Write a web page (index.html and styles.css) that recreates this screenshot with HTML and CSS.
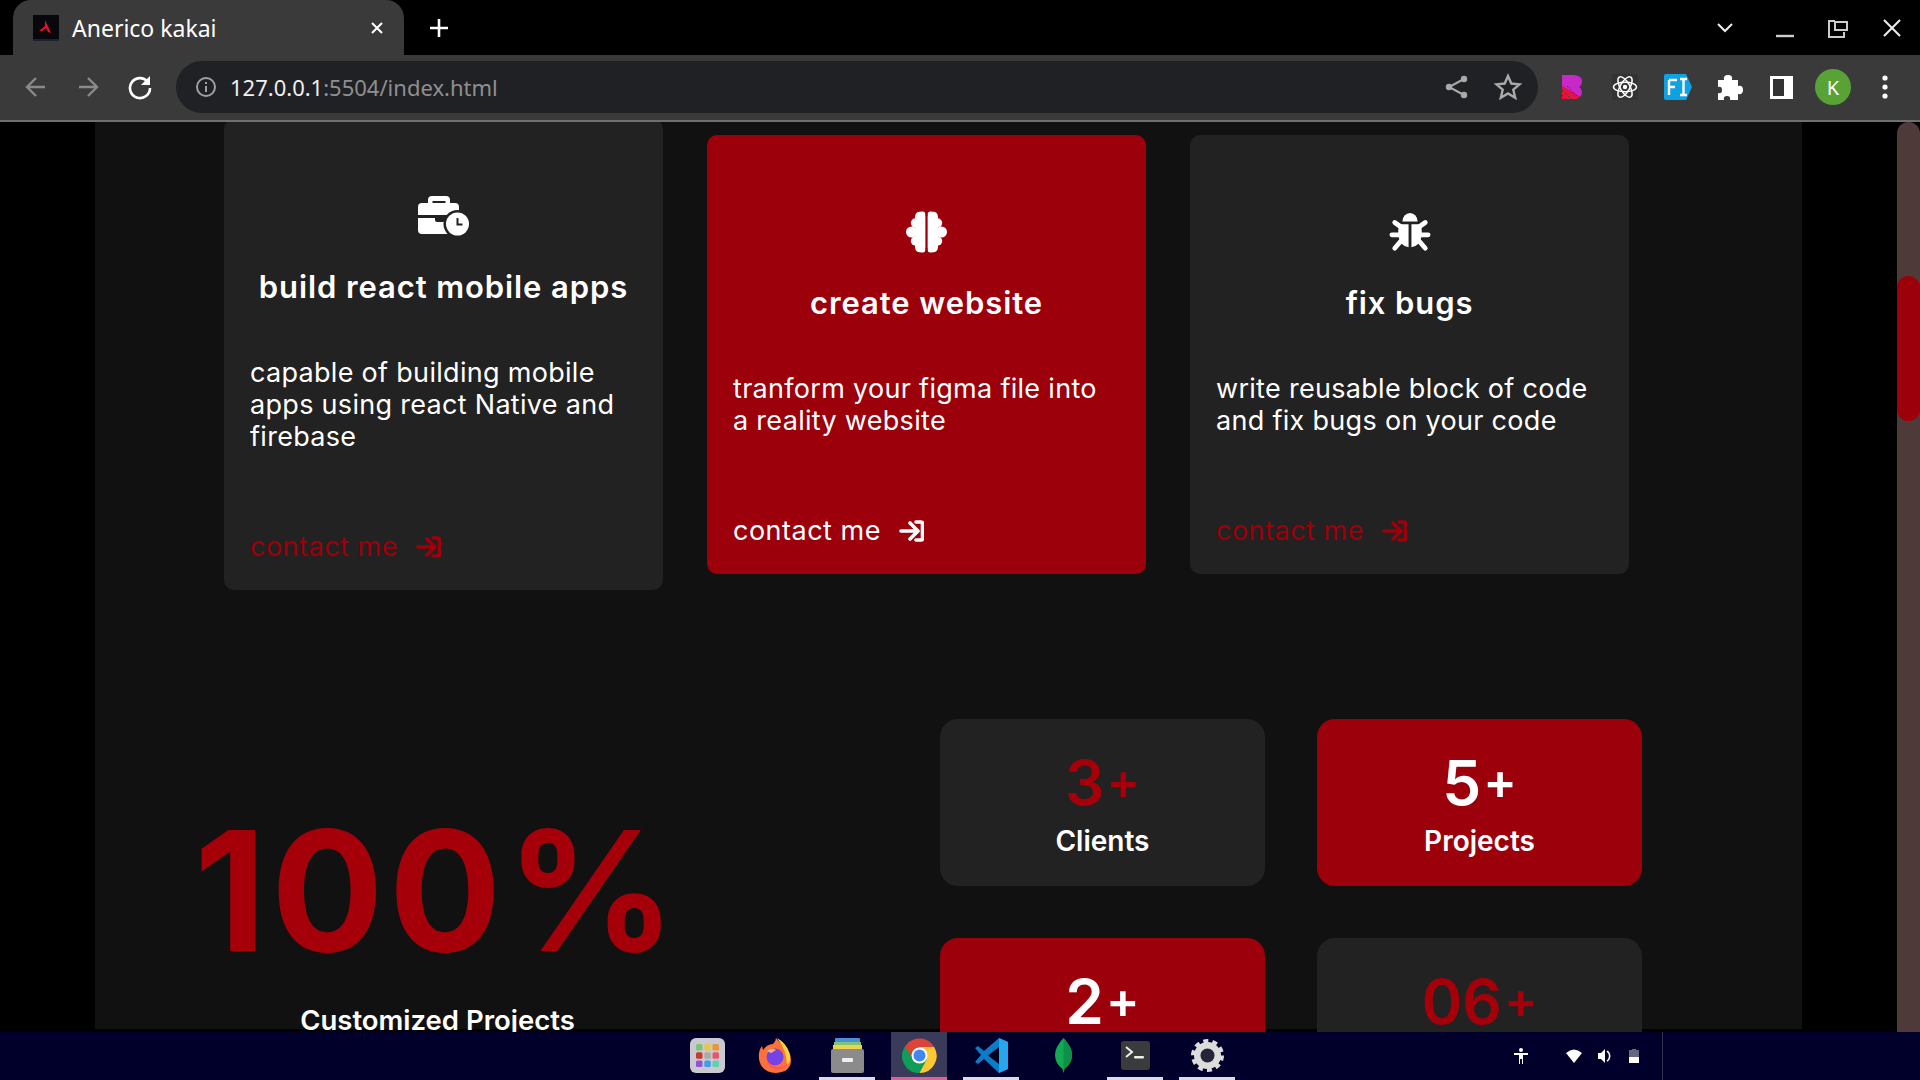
FILE: index.html
```html
<!DOCTYPE html>
<html lang="en">

<head>
    <meta charset="UTF-8">
    <meta name="viewport" content="width=device-width, initial-scale=1.0">
    <title>Anerico kakai</title>
    <link rel="stylesheet" href="styles.css">
</head>

<body>
    <!-- browser tabs -->
    <div class="tabstrip">
        <div class="tab">
            <svg class="favicon" viewBox="0 0 26 26"><rect width="26" height="26" fill="#08080c"/><path d="M12 5l6 13-3-1-2-4-4 3-3 0 6-5z" fill="#e8112d"/><rect y="24" width="26" height="2" fill="#1c2233"/></svg>
            <span class="tab-title">Anerico kakai</span>
            <svg class="tab-close" viewBox="0 0 14 14"><path d="M2 2l10 10M12 2L2 12" stroke="#fff" stroke-width="2"/></svg>
        </div>
        <svg class="new-tab" viewBox="0 0 20 20"><path d="M10 1v18M1 10h18" stroke="#fff" stroke-width="2.6"/></svg>
        <div class="window-btns">
            <svg class="win-btn" viewBox="0 0 52 52"><path d="M23 22l7 7 7-7" fill="none" stroke="#eee" stroke-width="2"/></svg>
            <svg class="win-btn" viewBox="0 0 52 52"><path d="M24 34h18" stroke="#ccc" stroke-width="2.4"/></svg>
            <svg class="win-btn" viewBox="0 0 52 52"><path d="M25 19h-5v16h15v-5M25 19v-1M26 20h12v8H26z" fill="none" stroke="#ccc" stroke-width="2"/></svg>
            <svg class="win-btn" viewBox="0 0 52 52"><path d="M18 18l16 16M34 18L18 34" stroke="#eee" stroke-width="2"/></svg>
        </div>
    </div>

    <!-- address bar -->
    <div class="toolbar">
        <svg class="tool-btn" viewBox="0 0 52 52"><path d="M35 26H18M26 17l-9 9 9 9" fill="none" stroke="#8a8a8a" stroke-width="2.4"/></svg>
        <svg class="tool-btn" viewBox="0 0 52 52"><path d="M17 26h17M26 17l9 9-9 9" fill="none" stroke="#8a8a8a" stroke-width="2.4"/></svg>
        <svg class="tool-btn" viewBox="0 0 52 52"><path d="M33.500 20.500A10 10 0 1 0 36 27" fill="none" stroke="#fff" stroke-width="2.600"/><path d="M36 15v9h-9z" fill="#fff"/></svg>
        <div class="omnibox">
            <svg class="info-icon" viewBox="0 0 22 22"><circle cx="11" cy="11" r="9" fill="none" stroke="#a0a0a0" stroke-width="2"/><path d="M11 10v6M11 6v2" stroke="#a0a0a0" stroke-width="2"/></svg>
            <span class="url">127.0.0.1<span class="url-rest">:5504/index.html</span></span>
            <svg class="omni-btn" viewBox="0 0 52 52"><circle cx="34" cy="18" r="3.200" fill="#aaa"/><circle cx="34" cy="34" r="3.200" fill="#aaa"/><circle cx="19" cy="26" r="3.200" fill="#aaa"/><path d="M34 18L19 26l15 8" fill="none" stroke="#aaa" stroke-width="2"/></svg>
            <svg class="omni-btn" viewBox="0 0 52 52"><path d="M26 15l3.300 7.500 8.200.8-6.200 5.400 1.900 8L26 32.500l-7.200 4.200 1.900-8-6.200-5.400 8.200-.8z" fill="none" stroke="#aaa" stroke-width="2.400"/></svg>
        </div>
        <svg class="tool-btn" viewBox="0 0 52 52"><path d="M15 14h11q9 0 9 6.500 0 3.500-3 5.500 3 2 3 5.500 0 3-2 4.500L15 25z" fill="#c828c8"/><path d="M15 25l18 11-3 2H15z" fill="#e8123c"/><path d="M15 29l9 9M15 34l4 4M20 25l13 13" stroke="#3a3a3a" stroke-width="1" stroke-dasharray="2 2"/></svg>
        <svg class="tool-btn" viewBox="0 0 52 52"><rect x="13" y="13" width="26" height="26" fill="#333"/><g fill="none" stroke="#fff" stroke-width="1.500"><ellipse cx="26" cy="26" rx="11.500" ry="4.800"/><ellipse cx="26" cy="26" rx="11.500" ry="4.800" transform="rotate(60 26 26)"/><ellipse cx="26" cy="26" rx="11.500" ry="4.800" transform="rotate(120 26 26)"/></g><circle cx="26" cy="26" r="2.200" fill="#fff"/></svg>
        <svg class="tool-btn" viewBox="0 0 52 52"><path d="M15 13h20l6 13-6 13H15q-2 0-2-2V15q0-2 2-2z" fill="#0ea2e4"/><path d="M18 19h8M18 19v15M18 26h6M29 18h7M29 34h7M32.500 18v16" fill="none" stroke="#fff" stroke-width="2.400"/></svg>
        <svg class="tool-btn" viewBox="0 0 52 52"><path d="M15 19h6q-1-5 4-5t4 5h6v6q5-1 5 4t-5 4v6H27q1-4-3-4t-3 4h-6v-7q4 1 4-3t-4-3z" fill="#fff"/></svg>
        <svg class="tool-btn" viewBox="0 0 52 52"><rect x="15" y="15" width="23" height="23" fill="#fff"/><rect x="18" y="18" width="11" height="17" fill="#333"/></svg>
        <div class="tool-slot"><div class="avatar">K</div></div>
        <svg class="tool-btn" viewBox="0 0 52 52"><circle cx="26" cy="17" r="2.600" fill="#fff"/><circle cx="26" cy="26" r="2.600" fill="#fff"/><circle cx="26" cy="35" r="2.600" fill="#fff"/></svg>
    </div>

    <!-- the scrolled page -->
    <div class="viewport">
        <div class="page">
            <div class="container">
                <section class="services">
                    <div class="card">
                        <svg class="card-icon" viewBox="0 -1 51 42"><path d="M10 7V4q0-4 4-4h14q4 0 4 4v3h5q4 0 4 4v8H0v-8q0-4 4-4zm4.500-2v2h13V5z" fill="#fff" fill-rule="evenodd"/><path d="M0 22h17v2q0 2 2 2h6q2 0 2-2v-2h14v16H4q-4 0-4-4z" fill="#fff"/><circle cx="39.500" cy="28" r="14" fill="#222"/><circle cx="39.500" cy="28" r="11.500" fill="#fff"/><path d="M39.500 22v6.500h5" fill="none" stroke="#222" stroke-width="2"/></svg>
                        <h3>build react mobile apps</h3>
                        <p>capable of building mobile apps using react Native and firebase</p>
                        <a class="contact">contact me
                            <svg viewBox="0 0 25 22"><path d="M2 11h16M11 3l8 8-8 8M17 2h5q1.500 0 1.500 1.500v15q0 1.500-1.500 1.500h-5" fill="none" stroke="currentColor" stroke-width="3.600" stroke-linecap="round" stroke-linejoin="round"/></svg>
                        </a>
                    </div>
                    <div class="card red">
                        <svg class="card-icon" viewBox="0 0 41 42"><g id="lobe" fill="#fff"><circle cx="13.500" cy="5" r="4.300"/><circle cx="9.500" cy="12" r="4.700"/><circle cx="5.500" cy="21" r="5.500"/><circle cx="9.500" cy="30" r="4.700"/><circle cx="13.500" cy="37" r="4.300"/><rect x="9" y="5" width="10.200" height="32"/><rect x="13" y="0.400" width="6.200" height="41.200" rx="2.500"/></g><use href="#lobe" transform="matrix(-1 0 0 1 41 0)"/></svg>
                        <h3>create website</h3>
                        <p>tranform your figma file into a reality website</p>
                        <a class="contact">contact me
                            <svg viewBox="0 0 25 22"><path d="M2 11h16M11 3l8 8-8 8M17 2h5q1.500 0 1.500 1.500v15q0 1.500-1.500 1.500h-5" fill="none" stroke="currentColor" stroke-width="3.600" stroke-linecap="round" stroke-linejoin="round"/></svg>
                        </a>
                    </div>
                    <div class="card">
                        <svg class="card-icon" viewBox="18 20 44 44"><path d="M32 31a8 9 0 0 1 16 0z" fill="#fff"/><path d="M29 34h9.500v24Q30 57 28 47q-1-9 1-13zM51 34h-9.500v24Q50 57 52 47q1-9-1-13z" fill="#fff"/><path d="M24 32l7 5M56 32l-7 5M21 45h8M59 45h-8M24 59l6-7M56 59l-6-7" stroke="#fff" stroke-width="5" stroke-linecap="round"/></svg>
                        <h3>fix bugs</h3>
                        <p>write reusable block of code and fix bugs on your code</p>
                        <a class="contact">contact me
                            <svg viewBox="0 0 25 22"><path d="M2 11h16M11 3l8 8-8 8M17 2h5q1.500 0 1.500 1.500v15q0 1.500-1.500 1.500h-5" fill="none" stroke="currentColor" stroke-width="3.600" stroke-linecap="round" stroke-linejoin="round"/></svg>
                        </a>
                    </div>
                </section>

                <section class="stats">
                    <div class="stats-left">
                        <div class="big-num">100%</div>
                        <div class="big-label">Customized Projects</div>
                    </div>
                    <div class="stats-grid">
                        <div class="stat">
                            <div class="stat-num">3<span class="plus">+</span></div>
                            <div class="stat-label">Clients</div>
                        </div>
                        <div class="stat red">
                            <div class="stat-num">5<span class="plus">+</span></div>
                            <div class="stat-label">Projects</div>
                        </div>
                        <div class="stat red">
                            <div class="stat-num">2<span class="plus">+</span></div>
                            <div class="stat-label">Years</div>
                        </div>
                        <div class="stat">
                            <div class="stat-num">06<span class="plus">+</span></div>
                            <div class="stat-label">Awards</div>
                        </div>
                    </div>
                </section>
            </div>
        </div>
        <div class="scroll-track">
            <div class="scroll-thumb"></div>
        </div>
    </div>

    <!-- desktop dock -->
    <div class="taskbar">
        <div class="dock">
            <div class="dock-item launcher">
                <svg viewBox="0 0 35 35"><rect width="35" height="35" rx="6" fill="#c9c9cf"/><rect x="6" y="6" width="6.500" height="6.500" rx="1.500" fill="#7cc576"/><rect x="14.300" y="6" width="6.500" height="6.500" rx="1.500" fill="#e8c547"/><rect x="22.500" y="6" width="6.500" height="6.500" rx="1.500" fill="#e8963a"/><rect x="6" y="14.300" width="6.500" height="6.500" rx="1.500" fill="#c8382e"/><rect x="14.300" y="14.300" width="6.500" height="6.500" rx="1.500" fill="#aaa"/><rect x="22.500" y="14.300" width="6.500" height="6.500" rx="1.500" fill="#e8556d"/><rect x="6" y="22.500" width="6.500" height="6.500" rx="1.500" fill="#8e55d8"/><rect x="14.300" y="22.500" width="6.500" height="6.500" rx="1.500" fill="#3f9ee8"/><rect x="22.500" y="22.500" width="6.500" height="6.500" rx="1.500" fill="#5fd0b0"/></svg>
            </div>
            <div class="dock-item">
                <svg viewBox="0 0 35 35"><path d="M18 0q4 5 8 8 7 6 7 14 0 12-15 13Q3 34 1 21 0 13 4 8l1 4q4-6 10-6 3-3 3-6z" fill="#ff7139"/><path d="M19 0q9 5 12 14 3 8-2 14 0-16-10-28z" fill="#ffd43b"/><circle cx="17" cy="19" r="8.500" fill="#7542e5"/><path d="M9 22q2 10 12 9 7-1 9-6-6 6-13 4-5-1-8-7z" fill="#ff4f5e"/><path d="M9 13q4-4 9-1l-5 3z" fill="#ffb08a"/></svg>
            </div>
            <div class="dock-item on">
                <svg viewBox="0 0 35 35"><rect x="5" y="0" width="25" height="5" rx="1" fill="#4a90d9"/><rect x="4" y="4" width="27" height="4" fill="#7cc576"/><rect x="3" y="7" width="29" height="4" fill="#f0d050"/><rect x="1" y="11" width="33" height="24" rx="2" fill="#8b8b8b"/><rect x="12" y="20" width="11" height="4" rx="1" fill="#eee"/></svg>
            </div>
            <div class="dock-item active">
                <svg viewBox="0 0 35 35"><circle cx="17.500" cy="17.500" r="17" fill="#db4437"/><path d="M17.500 35A17 17 0 0 0 32 9H17.500z" fill="#fcc934"/><path d="M3 8.500A17 17 0 0 0 17.500 35L25 21H11z" fill="#0f9d58"/><circle cx="17.500" cy="17.500" r="8" fill="#fff"/><circle cx="17.500" cy="17.500" r="6" fill="#4285f4"/></svg>
            </div>
            <div class="dock-item on">
                <svg viewBox="0 0 35 35"><path d="M25 0l9 4v27l-9 4L10 21l-6 5-3-2 6-7-6-7 3-2 6 5z" fill="#0a7cc8"/><path d="M25 0l9 4v27l-9 4z" fill="#25a6ee"/><path d="M25 9L14 17.500 25 26z" fill="#00001f"/></svg>
            </div>
            <div class="dock-item">
                <svg viewBox="0 0 35 35"><path d="M17.500 0q8.500 9 8.500 17t-7.500 14l-1 4-1-4Q9 25 9 17T17.500 0z" fill="#13aa52"/><path d="M17.500 0q8.500 9 8.500 17t-7.500 14l-1 4z" fill="#0f8f48"/></svg>
            </div>
            <div class="dock-item on">
                <svg viewBox="0 0 35 35"><rect x="3" y="3" width="29" height="29" rx="3" fill="#3b3b3b"/><path d="M8 9l6 5-6 5" fill="none" stroke="#eee" stroke-width="2"/><rect x="16" y="18" width="10" height="2.500" rx="1" fill="#eee"/></svg>
            </div>
            <div class="dock-item on">
                <svg viewBox="0 0 35 35"><circle cx="17.500" cy="17.500" r="10" fill="none" stroke="#dcdcdc" stroke-width="7"/><circle cx="17.500" cy="17.500" r="14.500" fill="none" stroke="#dcdcdc" stroke-width="4" stroke-dasharray="5 4.100"/><circle cx="17.500" cy="17.500" r="7" fill="#25253a"/></svg>
            </div>
        </div>
        <div class="tray">
            <svg class="tray-a11y" viewBox="0 0 14 16"><circle cx="7" cy="2" r="2" fill="#fff"/><path d="M0 5h14v2H9v9H8v-5H6v5H5V7H0z" fill="#fff"/></svg>
            <svg class="tray-wifi" viewBox="0 0 16 14"><path d="M0 4q8-7 16 0L8 14z" fill="#fff"/></svg>
            <svg class="tray-vol" viewBox="0 0 15 14"><path d="M0 4h3l4-4v14l-4-4H0z" fill="#fff"/><path d="M9 2a6 6 0 0 1 0 10" fill="none" stroke="#fff" stroke-width="1.500"/></svg>
            <svg class="tray-batt" viewBox="0 0 10 14"><path d="M3 0h4v1h3v7H0V1h3z" fill="#66667f"/><rect y="8" width="10" height="6" fill="#fff"/></svg>
            <div class="tray-sep"></div>
        </div>
    </div>
</body>

</html>
```

FILE: styles.css
```css
* {
    box-sizing: border-box;
}

body {
    margin: 0;
    height: 1080px;
    overflow: hidden;
    display: flex;
    flex-direction: column;
    background-color: #000;
    font-family: Inter, "Noto Sans", sans-serif;
    color: #fff;
}

/* browser chrome */
.tabstrip {
    height: 55px;
    background-color: #000;
    display: flex;
    align-items: center;
    flex-shrink: 0;
}

.tab {
    width: 391px;
    height: 55px;
    margin-left: 13px;
    padding: 0 20px;
    background-color: #3a3a3a;
    border-radius: 18px 18px 0 0;
    display: flex;
    align-items: center;
}

.favicon {
    width: 26px;
    height: 26px;
}

.tab-title {
    margin-left: 13px;
    font-family: "Noto Sans", sans-serif;
    font-size: 23px;
    flex: 1;
}

.tab-close {
    width: 14px;
    height: 14px;
}

.new-tab {
    width: 20px;
    height: 20px;
    margin-left: 25px;
}

.window-btns {
    margin-left: auto;
    margin-right: 2px;
    display: flex;
    gap: 5px;
}

.win-btn {
    width: 52px;
    height: 52px;
}

.toolbar {
    height: 67px;
    padding: 0 9px 1px 10px;
    background-color: #3a3a3a;
    border-bottom: 2px solid #6f6f6f;
    display: flex;
    align-items: center;
    flex-shrink: 0;
}

.tool-btn {
    width: 52px;
    height: 52px;
    flex-shrink: 0;
}

.tool-slot {
    width: 52px;
    height: 52px;
    display: flex;
    align-items: center;
    justify-content: center;
}

.avatar {
    width: 36px;
    height: 36px;
    border-radius: 50%;
    background-color: #58a236;
    font-size: 20px;
    font-family: "Noto Sans", sans-serif;
    display: flex;
    align-items: center;
    justify-content: center;
}

.omnibox {
    width: 1362px;
    height: 52px;
    margin: 0 9px 0 10px;
    padding: 0 4px 0 19px;
    background-color: #202124;
    border-radius: 26px;
    display: flex;
    align-items: center;
    flex-shrink: 0;
}

.info-icon {
    width: 22px;
    height: 22px;
}

.url {
    margin-left: 13px;
    font-family: "Noto Sans", sans-serif;
    font-size: 22px;
    color: #f0f0f0;
    flex: 1;
}

.url-rest {
    color: #8f8f8f;
}

.omni-btn {
    width: 52px;
    height: 52px;
    flex-shrink: 0;
}

/* page */
.viewport {
    height: 910px;
    display: flex;
    overflow: hidden;
    flex-shrink: 0;
}

.page {
    flex: 1;
    background-color: #000;
    overflow: hidden;
}

.container {
    width: 1707px;
    height: 100%;
    margin-left: 95px;
    background-color: #111;
}

.services {
    margin-top: -3px;
    margin-left: 129px;
    display: flex;
    align-items: center;
    gap: 44px;
}

.card {
    width: 439px;
    padding: 76px 26px 27px;
    background-color: #222;
    border-radius: 10px;
    display: flex;
    flex-direction: column;
}

.card.red {
    background-color: #9b000b;
}

.card-icon {
    height: 42px;
    align-self: center;
}

.card h3 {
    margin: 30px -20px 0;
    height: 40px;
    line-height: 40px;
    font-size: 31px;
    font-weight: 600;
    letter-spacing: 0.9px;
    text-align: center;
    white-space: nowrap;
}

.card p {
    margin: 50px 0 0;
    font-size: 27px;
    line-height: 32px;
    letter-spacing: 0.3px;
    font-weight: 400;
}

.contact {
    margin-top: 78px;
    height: 32px;
    font-size: 27px;
    line-height: 32px;
    letter-spacing: 0.5px;
    color: #9b000b;
    display: flex;
    align-items: center;
    gap: 18px;
}

.card.red .contact {
    color: #fff;
}

.contact svg {
    width: 25px;
    height: 22px;
}

/* numbers */
.stats {
    margin-top: 129px;
    padding-left: 112px;
    display: flex;
}

.stats-left {
    width: 461px;
    margin-right: 272px;
    padding-top: 88px;
}

.big-num {
    font-size: 167px;
    line-height: 167px;
    font-weight: 700;
    letter-spacing: 5px;
    color: #a5000a;
    text-align: center;
    white-space: nowrap;
    margin: 0 -20px;
}

.big-label {
    margin-top: 29px;
    font-size: 27.500px;
    font-weight: 600;
    text-align: center;
}

.stats-grid {
    display: grid;
    grid-template-columns: 325px 325px;
    grid-auto-rows: 167px;
    column-gap: 52px;
    row-gap: 52px;
}

.stat {
    background-color: #222;
    border-radius: 18px;
    display: flex;
    flex-direction: column;
    align-items: center;
    padding-top: 24px;
}

.stat.red {
    background-color: #9b000b;
}

.stat-num {
    font-size: 62px;
    line-height: 76px;
    font-weight: 600;
    color: #a5000a;
}

.stat.red .stat-num {
    color: #fff;
}

.plus {
    font-size: 50px;
    margin-left: 2px;
    vertical-align: 6px;
}

.stat-label {
    margin-top: 2px;
    font-size: 28px;
    line-height: 36px;
    font-weight: 600;
}

.scroll-track {
    width: 23px;
    background-color: #4f3a3a;
    border-radius: 12px 12px 0 0;
    flex-shrink: 0;
}

.scroll-thumb {
    height: 145px;
    margin-top: 154px;
    background-color: #9b000b;
    border-radius: 12px;
}

/* dock */
.taskbar {
    height: 48px;
    background-color: #00002a;
    display: flex;
    flex-shrink: 0;
}

.dock {
    margin-left: 675px;
    display: flex;
    gap: 16px;
}

.dock-item {
    width: 56px;
    height: 48px;
    padding-top: 6px;
    display: flex;
    justify-content: center;
    border-bottom: 3px solid transparent;
}

.dock-item svg {
    width: 35px;
    height: 35px;
}

.dock-item.launcher {
    margin-left: 4px;
    margin-right: -4px;
}

.dock-item.on {
    border-bottom-color: #dcdce6;
}

.dock-item.active {
    background-color: #3a3a5a;
    border-bottom-color: #e0609a;
}

.tray {
    margin-left: 279px;
    display: flex;
    align-items: center;
}

.tray-a11y {
    width: 14px;
    height: 16px;
}

.tray-wifi {
    width: 16px;
    height: 14px;
    margin-left: 38px;
}

.tray-vol {
    width: 15px;
    height: 14px;
    margin-left: 16px;
}

.tray-batt {
    width: 10px;
    height: 14px;
    margin-left: 16px;
}

.tray-sep {
    width: 1px;
    height: 48px;
    margin-left: 23px;
    background-color: #333350;
}
```
